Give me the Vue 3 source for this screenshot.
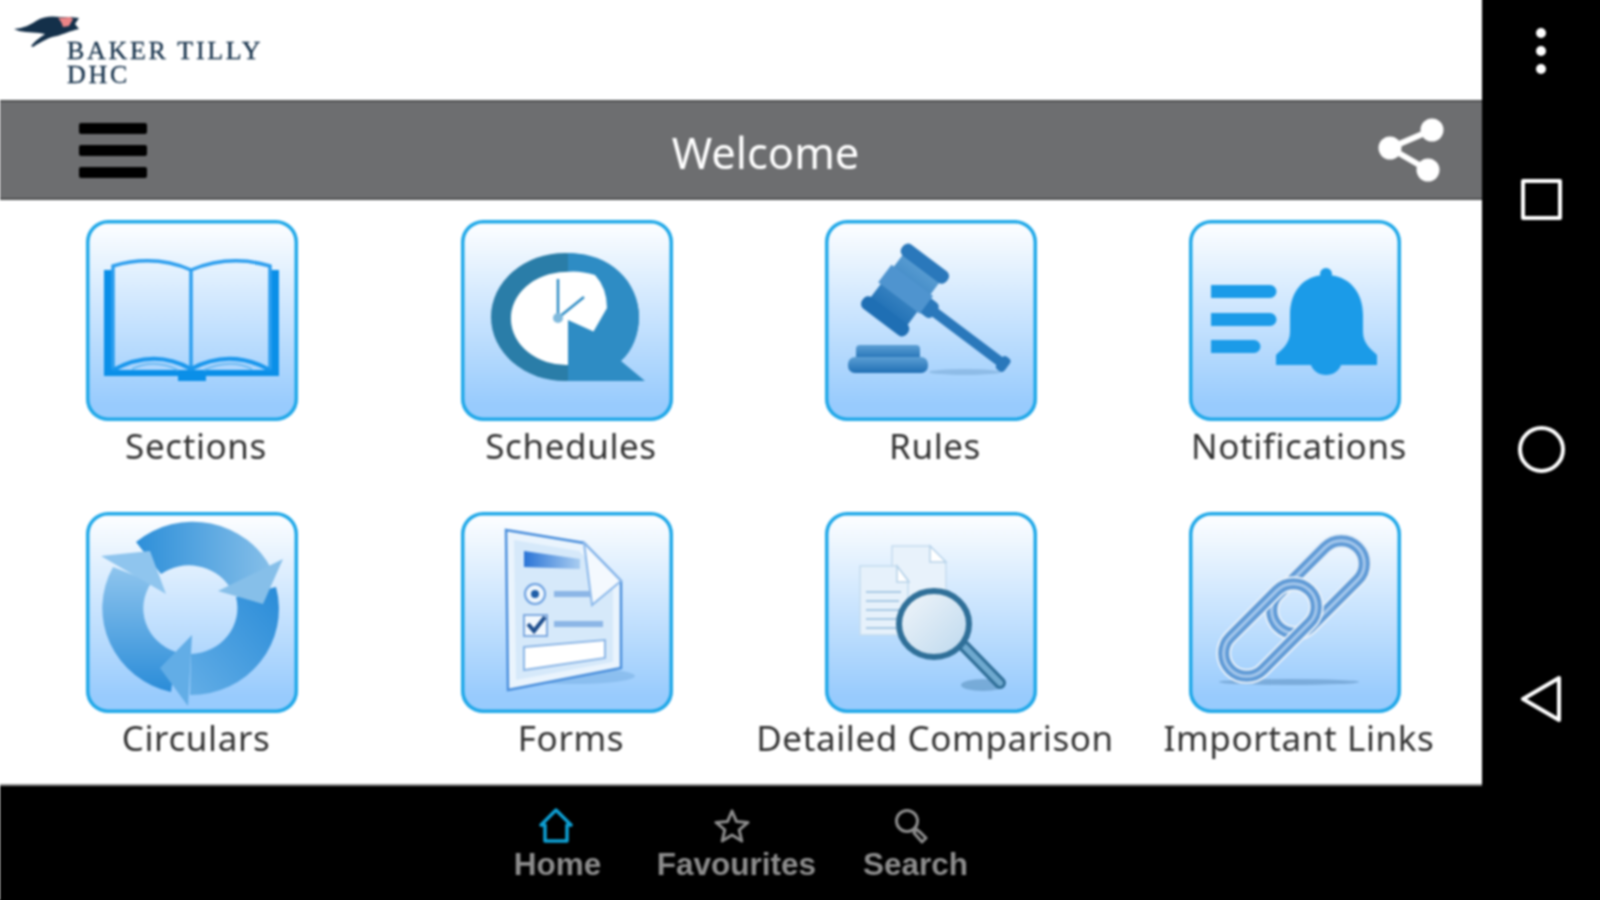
<template>
  <div class="frame">
    <div class="screen">
      <div class="main">
        <header class="logo-row">
          <svg class="bird" viewBox="0 0 66 32" aria-hidden="true">
            <path d="M0 13 C10 12 16 9 22 5 C30 0 38 0 46 1 L56 1 L65 2 L61 8 L65 13 C56 15 50 18 43 20 C36 21 28 25 19 31 L17 30 C22 24 27 21 31 18 C24 16 14 17 5 15 Z" fill="#14304a" />
            <path d="M44 2 L56 1 L59 3 L55 10 L49 11 C48 7 46 4 44 2 Z" fill="#ec8587" />
          </svg>
          <div class="wordmark">
            <span>BAKER TILLY</span>
            <span>DHC</span>
          </div>
        </header>

        <div class="title-bar">
          <div class="burger"><i></i><i></i><i></i></div>
          <div class="title">Welcome</div>
          <svg class="share" viewBox="0 0 66 66" aria-hidden="true">
            <path d="M54 13 L12 31 L50 53" fill="none" stroke="#fff" stroke-width="6" />
            <circle cx="54" cy="13" r="11.5" fill="#fff" />
            <circle cx="12" cy="31" r="11.5" fill="#fff" />
            <circle cx="50" cy="53" r="11.5" fill="#fff" />
          </svg>
        </div>

        <div class="grid">
          <div v-for="t in tiles" :key="t.name" class="cell">
            <div class="tile">
              <svg v-if="t.icon === 'book'" viewBox="0 0 212 201">
                <path d="M18 50 H27 V150 H184 V50 H193 V156 H120 V161 H92 V156 H18 Z" fill="#0a8fe8" />
                <path d="M27 150 V46 Q68 34 105 50 Q144 34 184 46 V150 M105 50 V148" fill="none" stroke="#2c9eee" stroke-width="3.5" />
                <path d="M27 150 Q68 128 105 149 Q144 128 184 150" fill="none" stroke="#1896ec" stroke-width="4" />
                <path d="M46 149 Q68 138 92 150 M118 150 Q144 138 166 149" fill="none" stroke="#6dbaf2" stroke-width="2" />
              </svg>

              <svg v-else-if="t.icon === 'clock'" viewBox="0 0 212 201">
                <ellipse cx="104" cy="97" rx="74" ry="64" fill="#2a7da8" />
                <path d="M107 33 C150 33 178 62 178 97 C178 114 172 130 160 141 L184 161 H107 Z" fill="#2e8cc4" />
                <path d="M107 145 V100 L132.5 111.5 L146 88 Q146 68 134 55 Q118 50 104 52 A55 46 0 0 0 107 145 Z" fill="#fff" />
                <path d="M97 98 V59 M97 98 L123 77" fill="none" stroke="#2e8cc4" stroke-width="2.5" />
                <circle cx="97" cy="98" r="5" fill="#7fb9dc" />
              </svg>

              <svg v-else-if="t.icon === 'gavel'" viewBox="0 0 212 201">
                <defs>
                  <linearGradient id="gv" x1="0" y1="0" x2="0" y2="1">
                    <stop offset="0" stop-color="#5c9fd4" />
                    <stop offset="1" stop-color="#1f6fb4" />
                  </linearGradient>
                </defs>
                <ellipse cx="140" cy="152" rx="36" ry="3" fill="#6d9fcb" opacity="0.45" />
                <g transform="rotate(37 80 70)" fill="#2a78bb">
                  <rect x="98" y="65" width="108" height="10" />
                  <rect x="100" y="61" width="18" height="18" rx="5" />
                  <rect x="198" y="62" width="10" height="16" rx="4" />
                  <rect x="57" y="38" width="46" height="64" fill="url(#gv)" />
                  <rect x="52" y="30" width="56" height="14" rx="6" />
                  <rect x="52" y="96" width="56" height="14" rx="6" fill="#1f6fb4" />
                  <rect x="54" y="58" width="52" height="22" fill="#4f94cf" />
                </g>
                <rect x="31" y="125" width="64" height="15" rx="4" fill="url(#gv)" />
                <rect x="23" y="137" width="80" height="16" rx="7" fill="url(#gv)" />
              </svg>

              <svg v-else-if="t.icon === 'bell'" viewBox="0 0 212 201">
                <g fill="#1b9be8">
                  <path d="M22 65 H81 A6.5 6.5 0 0 1 81 78 H22 Z" />
                  <path d="M22 93 H81 A6.5 6.5 0 0 1 81 106 H22 Z" />
                  <path d="M22 120 H65 A6.5 6.5 0 0 1 65 133 H22 Z" />
                  <circle cx="137" cy="54" r="6" />
                  <path d="M137 55 C160 55 174 72 174 95 V112 C174 124 183 130 188 135 V145 H87 V135 C92 130 101 124 101 112 V95 C101 72 114 55 137 55 Z" />
                  <path d="M122 145 H152 C150 151 144 155 137 155 C130 155 124 151 122 145 Z" />
                </g>
              </svg>

              <svg v-else-if="t.icon === 'cycle'" viewBox="0 0 212 201">
                <defs>
                  <linearGradient id="c1" x1="0" y1="1" x2="0" y2="0">
                    <stop offset="0" stop-color="#2a8cd8" />
                    <stop offset="1" stop-color="#8fc5ee" />
                  </linearGradient>
                  <linearGradient id="c2" x1="0" y1="0" x2="1" y2="0">
                    <stop offset="0" stop-color="#2d8fd9" />
                    <stop offset="1" stop-color="#86bfe9" />
                  </linearGradient>
                  <linearGradient id="c3" x1="1" y1="0" x2="0" y2="1">
                    <stop offset="0" stop-color="#2a8cd8" />
                    <stop offset="1" stop-color="#62ade6" />
                  </linearGradient>
                </defs>
                <path d="M50 30 A88 86 0 0 1 186 58 L143 74 A48 46 0 0 0 75 62 Z" fill="url(#c2)" />
                <path d="M190 75 A88 86 0 0 1 104 183 L105 142 A48 46 0 0 0 150 85 Z" fill="url(#c3)" />
                <path d="M85 180 A88 86 0 0 1 27 55 L66 70 A48 46 0 0 0 90 140 Z" fill="url(#c1)" />
                <polygon points="15,44 64,39 80,82" fill="#8fc5ee" />
                <polygon points="197,47 177,92 132,79" fill="#86bfe9" />
                <polygon points="106,123 102,194 74,156" fill="#62ade6" />
              </svg>

              <svg v-else-if="t.icon === 'form'" viewBox="0 0 212 201">
                <defs>
                  <linearGradient id="fb" x1="0" y1="0" x2="1" y2="0">
                    <stop offset="0" stop-color="#2a74d6" />
                    <stop offset="1" stop-color="#a9cdf1" />
                  </linearGradient>
                </defs>
                <ellipse cx="112" cy="164" rx="62" ry="8" fill="#6ea9de" opacity="0.45" />
                <path d="M45 18 L123 31 L160 69 V156 L47 178 Z" fill="#eaf4fd" stroke="#4b8fdc" stroke-width="2.5" />
                <path d="M53 28 L118 39 L152 74 V150 L55 168 Z" fill="#d6e9fa" />
                <path d="M63 39 L119 47 V57 L63 55 Z" fill="url(#fb)" />
                <path d="M123 31 L131 93 L160 69 Z" fill="#f4f9fe" stroke="#8bb8ea" stroke-width="2" />
                <ellipse cx="74" cy="82" rx="10" ry="10" fill="#eef6fd" stroke="#6a9edf" stroke-width="2" />
                <circle cx="74" cy="82" r="4" fill="#1f5ea8" />
                <path d="M93 82 H130" stroke="#8cb6e6" stroke-width="6" />
                <rect x="63" y="103" width="23" height="21" fill="#f2f8fe" stroke="#7ea9df" stroke-width="2" />
                <path d="M67 112 L73 119 L84 105" fill="none" stroke="#1f4f8e" stroke-width="4" />
                <path d="M93 112 H142" stroke="#8cb6e6" stroke-width="6" />
                <path d="M63 135 L144 128 V146 L63 158 Z" fill="#fff" stroke="#8cb6e6" stroke-width="2" />
              </svg>

              <svg v-else-if="t.icon === 'search'" viewBox="0 0 212 201">
                <defs>
                  <linearGradient id="ln" x1="0" y1="0" x2="1" y2="1">
                    <stop offset="0" stop-color="#f2f6fa" />
                    <stop offset="1" stop-color="#bcd8ee" />
                  </linearGradient>
                </defs>
                <ellipse cx="158" cy="173" rx="22" ry="6" fill="#4f87b4" opacity="0.5" />
                <path d="M67 34 H105 L121 52 V90 H67 Z" fill="#e8f2fb" stroke="#c5dcef" stroke-width="1.5" />
                <path d="M105 34 V50 H121 Z" fill="#fff" stroke="#b6d2e9" stroke-width="1.5" />
                <path d="M35 54 H72 L83 68 V123 H35 Z" fill="#e6f1fb" stroke="#c3dbef" stroke-width="1.5" />
                <path d="M72 54 V70 H84 Z" fill="#fff" stroke="#b6d2e9" stroke-width="1.5" />
                <path d="M41 80 H76 M41 89 H74 M41 98 H74 M41 107 H74 M41 116 H74" stroke="#a9c9e4" stroke-width="2" />
                <path d="M139 134 L175 171" stroke="#2f6e97" stroke-width="12" stroke-linecap="round" />
                <path d="M139 134 L175 171" stroke="#6fa9cf" stroke-width="6" stroke-linecap="round" />
                <ellipse cx="109" cy="112" rx="35" ry="33" fill="url(#ln)" stroke="#2f6f98" stroke-width="6" />
              </svg>

              <svg v-else viewBox="0 0 212 201">
                <ellipse cx="100" cy="170" rx="70" ry="3" fill="#5d8fbf" opacity="0.55" />
                <g v-for="(c, i) in links" :key="i" fill="none" :transform="`rotate(-45 ${c[0]} ${c[1]})`">
                  <rect :x="c[0] - 56" :y="c[1] - 23" width="112" height="46" rx="23" stroke="#e7f0f9" stroke-width="15" />
                  <rect :x="c[0] - 56" :y="c[1] - 23" width="112" height="46" rx="23" stroke="#5f9ad6" stroke-width="11" />
                  <rect :x="c[0] - 56" :y="c[1] - 23" width="112" height="46" rx="23" stroke="#a6c8ec" stroke-width="3" />
                </g>
              </svg>
            </div>
            <div class="label">{{ t.name }}</div>
          </div>
        </div>

        <nav class="tabs">
          <div class="tab">
            <svg viewBox="0 0 36 36" aria-hidden="true">
              <path d="M18 2 L33 17 H29 V33 H7 V17 H3 Z" fill="none" stroke="#0e9fd2" stroke-width="3.5" stroke-linejoin="round" />
            </svg>
            <span>Home</span>
          </div>
          <div class="tab">
            <svg viewBox="0 0 36 36" aria-hidden="true">
              <path d="M18 3 L22.4 13.4 L34 14.4 L25.2 21.8 L27.8 33 L18 27 L8.2 33 L10.8 21.8 L2 14.4 L13.6 13.4 Z" fill="none" stroke="#8c8c8c" stroke-width="3" stroke-linejoin="round" />
            </svg>
            <span>Favourites</span>
          </div>
          <div class="tab">
            <svg viewBox="0 0 36 36" aria-hidden="true">
              <circle cx="14" cy="13" r="10.5" fill="none" stroke="#8c8c8c" stroke-width="3" />
              <path d="M23 21 L28 25 L33 30 L29 34 L21 25 Z" fill="none" stroke="#8c8c8c" stroke-width="3" stroke-linejoin="round" />
            </svg>
            <span>Search</span>
          </div>
        </nav>
      </div>

      <aside class="sys-bar">
        <div class="dots"><i></i><i></i><i></i></div>
        <div class="square"></div>
        <div class="round"></div>
        <svg class="back" viewBox="0 0 42 48" aria-hidden="true">
          <path d="M3 24 L39 3 V45 Z" fill="none" stroke="#fff" stroke-width="4" stroke-linejoin="round" />
        </svg>
      </aside>
    </div>
  </div>
</template>

<script setup>
const tiles = [
  { name: 'Sections', icon: 'book' },
  { name: 'Schedules', icon: 'clock' },
  { name: 'Rules', icon: 'gavel' },
  { name: 'Notifications', icon: 'bell' },
  { name: 'Circulars', icon: 'cycle' },
  { name: 'Forms', icon: 'form' },
  { name: 'Detailed Comparison', icon: 'search' },
  { name: 'Important Links', icon: 'link' }
]

// centres of the two chain links
const links = [
  [129, 75],
  [81, 118]
]
</script>

<style scoped>
.frame {
  width: 1600px;
  height: 900px;
  overflow: hidden;
}

/* 4px bleed so the blur doesn't fade out at the window edges */
.screen {
  display: flex;
  width: 1608px;
  height: 908px;
  box-sizing: border-box;
  margin: -4px;
  padding: 4px;
  background:
    linear-gradient(#000, #000) bottom / 100% 4px no-repeat,
    linear-gradient(90deg, #fff 1486px, #000 0);
  filter: blur(0.9px);
}

.main {
  width: 1482px;
  display: flex;
  flex-direction: column;
  background: #fff;
}

.logo-row {
  height: 100px;
  flex: none;
  box-sizing: border-box;
  padding: 16px 0 0 14px;
  display: flex;
  align-items: flex-start;
}

.bird {
  width: 66px;
  height: 32px;
  flex: none;
}

.wordmark {
  display: flex;
  flex-direction: column;
  margin: 23px 0 0 -13px;
  font-family: "Liberation Serif", serif;
  font-size: 26px;
  line-height: 24px;
  letter-spacing: 2.7px;
  color: #14304a;
  -webkit-text-stroke: 0.3px #14304a;
}

.title-bar {
  height: 100px;
  flex: none;
  box-sizing: border-box;
  padding: 0 38px 0 79px;
  display: flex;
  align-items: center;
  justify-content: space-between;
  background: #6d6e70;
  border-top: 2px solid #4f5052;
  border-bottom: 2px solid #4f5052;
}

.burger {
  width: 68px;
  display: flex;
  flex-direction: column;
  gap: 11px;
}

.burger i {
  height: 11px;
  border-radius: 2px;
  background: #000;
}

.title {
  margin: 4px 0 0 6px;
  font-family: "Noto Sans", sans-serif;
  font-size: 43.5px;
  line-height: 50px;
  color: #fff;
}

.share {
  width: 66px;
  height: 66px;
}

.grid {
  height: 584px;
  flex: none;
  box-sizing: border-box;
  padding-top: 20px;
  display: grid;
  grid-template-columns: 392px 358px 370px 358px;
  grid-auto-rows: 292px;
  overflow: hidden;
}

.cell {
  display: flex;
  flex-direction: column;
  align-items: center;
}

.tile {
  width: 212px;
  height: 201px;
  margin-right: 8px;
  flex: none;
  border-radius: 22px;
  background: linear-gradient(#fff, #98cbfd 92%);
  box-shadow: inset 0 0 0 3.5px #1fa8e8;
}

.tile svg {
  display: block;
  width: 100%;
  height: 100%;
}

.label {
  margin-top: 5px;
  font-family: "Noto Sans", sans-serif;
  font-size: 35px;
  line-height: 40px;
  letter-spacing: 0.6px;
  white-space: nowrap;
  color: #333;
}

.tabs {
  height: 116px;
  flex: none;
  box-sizing: border-box;
  padding: 22px 0 0 468px;
  display: flex;
  background: #000;
  border-top: 2px solid #8a8a8a;
}

.tab {
  width: 179px;
  display: flex;
  flex-direction: column;
  align-items: center;
  font-family: "Liberation Sans", sans-serif;
  font-weight: 700;
  font-size: 31.5px;
  line-height: 40px;
  color: #8c8c8c;
}

.tab svg {
  width: 36px;
  height: 36px;
  margin-right: 4px;
}

.tab + .tab svg {
  margin-right: 9px;
}

.sys-bar {
  flex: 1;
  box-sizing: border-box;
  padding-top: 28px;
  display: flex;
  flex-direction: column;
  align-items: center;
}

.dots {
  display: flex;
  flex-direction: column;
  gap: 8px;
}

.dots i {
  width: 10px;
  height: 10px;
  border-radius: 50%;
  background: #fff;
}

.square {
  width: 41px;
  height: 41px;
  box-sizing: border-box;
  margin-top: 105px;
  border: 4px solid #fff;
  border-radius: 2px;
}

.round {
  width: 47px;
  height: 47px;
  box-sizing: border-box;
  margin-top: 206px;
  border: 4px solid #fff;
  border-radius: 50%;
}

.back {
  width: 42px;
  height: 48px;
  margin-top: 202px;
}
</style>
